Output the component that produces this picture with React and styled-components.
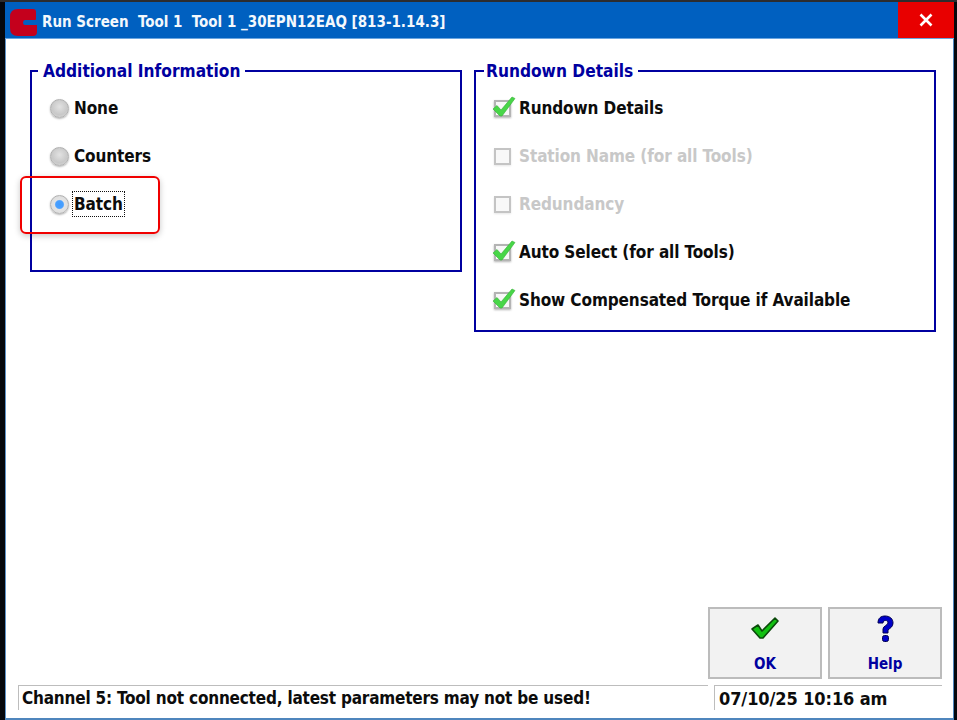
import React from 'react';
import styled, { createGlobalStyle } from 'styled-components';

const Global = createGlobalStyle`
   html, body { margin: 0; padding: 0; background: #05070c; }
   body { font-family: "DejaVu Sans Condensed", "DejaVu Sans", sans-serif; font-stretch: condensed; }
`;

const Screen = styled.div`
   width: 957px;
   height: 720px;
   box-sizing: border-box;
   padding: 0 3px 0 5px;
   border-top: 2px solid #2c2c2e;
   background: #05070c;
   display: flex;
   overflow: hidden;
`;

const Window = styled.div`
   position: relative;
   flex: 1;
   display: flex;
   flex-direction: column;
   background: #fff;
   border-left: 1px solid #5f93c8;
   border-right: 1px solid #4f86bd;
   border-bottom: 2px solid #4f86bd;
`;

const TitleBar = styled.header`
   height: 36px;
   margin: 0 -1px 0 -1px;
   background: #0060c0;
   border-bottom: 1px solid #6aa5e0;
   display: flex;
   align-items: center;
   flex-shrink: 0;
`;

const Logo = styled.svg`
   width: 28px;
   height: 27px;
   margin: 5px 0 0 5px;
   flex-shrink: 0;
`;

const Title = styled.div`
   flex: 1;
   margin: 3px 0 0 4px;
   color: #f4f8fc;
   font-size: 15px;
   font-weight: 700;
   white-space: pre;
`;

const CloseButton = styled.button`
   width: 56px;
   height: 36px;
   padding: 0;
   border: 0;
   background: #e80000;
   display: flex;
   align-items: center;
   justify-content: center;
`;

const Panels = styled.div`
   display: flex;
   align-items: flex-start;
   padding: 22px 0 0 24px;
   flex: 1;
`;

const Group = styled.fieldset`
   box-sizing: border-box;
   width: ${(p) => p.$width}px;
   height: ${(p) => p.$height}px;
   margin: 0 ${(p) => p.$gap || 0}px 0 0;
   padding: 3px 0 0 17px;
   border: 2px solid #0000a0;
   min-inline-size: 0;
`;

const Legend = styled.legend`
   margin-left: ${(p) => p.$offset}px;
   padding: 0 5px 0 ${(p) => p.$padLeft ?? 5}px;
   color: #0000a0;
   font-size: 17.2px;
   font-weight: 700;
   line-height: 20px;
`;

const Row = styled.div`
   height: 48px;
   display: flex;
   align-items: center;
   font-size: 17px;
   letter-spacing: -0.1px;
   font-weight: 700;
   color: ${(p) => (p.$disabled ? '#c8c8c8' : '#0c0c0c')};
`;

const RadioRow = styled(Row)`
   margin-left: 1px;
`;

const Radio = styled.span`
   box-sizing: border-box;
   width: 19px;
   height: 19px;
   margin-right: ${(p) => (p.$on ? 4 : 5)}px;
   border-radius: 50%;
   flex-shrink: 0;
   border: 1px solid #b0b0b0;
   box-shadow: 0 1px 2px rgba(0, 0, 0, 0.3);
   background: ${(p) =>
      p.$on
         ? 'radial-gradient(circle, #3f9bff 0, #4aa0ff 32%, #e4e4e4 42%, #d8d8d8 100%)'
         : 'radial-gradient(circle at 50% 40%, #e2e2e2 0, #c8c8c8 60%, #dedede 100%)'};
`;

const Focus = styled.span`
   padding: 0 1px;
   line-height: 24px;
   outline: 1px dotted #111;
`;

const CheckWrap = styled.span`
   position: relative;
   box-sizing: border-box;
   width: 17px;
   height: 17px;
   margin: 0 8px 0 1px;
   flex-shrink: 0;
   background: #f8f8f8;
   border: 2px solid ${(p) => (p.$disabled ? '#c4c4c4' : '#b4b4b4')};
   box-shadow: 0 1px 2px rgba(0, 0, 0, ${(p) => (p.$disabled ? 0.1 : 0.3)});
`;

const Tick = styled.svg`
   position: absolute;
   left: -4px;
   top: -6px;
   width: 24px;
   height: 22px;
`;

const Marker = styled.div`
   position: absolute;
   left: 14px;
   top: 174px;
   box-sizing: border-box;
   width: 140px;
   height: 58px;
   border: 2px solid #f00000;
   border-radius: 6px;
   box-shadow: 0 2px 6px rgba(0, 0, 0, 0.22);
`;

const Actions = styled.div`
   display: flex;
   justify-content: flex-end;
   gap: 6px;
   padding-right: 11px;
   flex-shrink: 0;
`;

const ActionButton = styled.button`
   box-sizing: border-box;
   width: 114px;
   height: 72px;
   padding: 6px 0 4px;
   background: #f2f2f2;
   border: 2px solid #bcbcbc;
   color: #0000a0;
   font-family: inherit;
   font-stretch: condensed;
   font-size: 15px;
   font-weight: 700;
   display: flex;
   flex-direction: column;
   align-items: center;
   justify-content: space-between;
`;

const StatusBar = styled.footer`
   display: flex;
   gap: 6px;
   height: 25px;
   margin: 6px 11px 8px 12px;
   flex-shrink: 0;
`;

const StatusCell = styled.div`
   box-sizing: border-box;
   flex: 1;
   padding: 0 0 0 3px;
   border-top: 1px solid #bdbdbd;
   border-left: 1px solid #bdbdbd;
   color: #0c0c0c;
   font-size: 17px;
   letter-spacing: -0.2px;
   font-weight: 700;
   line-height: 25px;
   white-space: nowrap;
`;

const ClockCell = styled(StatusCell)`
   flex: 0 0 228px;
   padding-left: 4px;
   font-size: 18px;
   letter-spacing: -0.1px;
`;

const GreenTick = () => (
   <Tick viewBox="0 0 24 22">
      <path
         d="M1 13 L5 9.5 L9 14 L20 1 L23 2.5 L10 20 L8 20 Z"
         fill="#48d648"
         stroke="#35b035"
         strokeWidth="0.6"
      />
   </Tick>
);

const CheckRow = ({ label, checked, disabled }) => (
   <Row $disabled={disabled}>
      <CheckWrap $disabled={disabled}>{checked && <GreenTick />}</CheckWrap>
      {label}
   </Row>
);

const App = () => {
   return (
      <Screen>
         <Global />
         <Window>
            <TitleBar>
               <Logo viewBox="0 0 28 27">
                  <path
                     d="M8 0 H23 Q26 0 26 3 V10 Q26 11 25 11 H15 Q13 11 13 13.5 Q13 16 15 16 H27 V23 Q27 27 23 27 H8 Q0 27 0 19 V8 Q0 0 8 0 Z"
                     fill="#c4001c"
                  />
               </Logo>
               <Title>Run Screen  Tool 1  Tool 1 _30EPN12EAQ [813-1.14.3]</Title>
               <CloseButton aria-label="close">
                  <svg width="14" height="14" viewBox="0 0 14 14">
                     <path d="M1.5 1.5 L12.5 12.5 M12.5 1.5 L1.5 12.5" stroke="#fff" strokeWidth="2.6" />
                  </svg>
               </CloseButton>
            </TitleBar>

            <Panels>
               <Group $width={432} $height={211} $gap={12}>
                  <Legend $offset={-11}>Additional Information</Legend>
                  <RadioRow>
                     <Radio />
                     None
                  </RadioRow>
                  <RadioRow>
                     <Radio />
                     Counters
                  </RadioRow>
                  <RadioRow>
                     <Radio $on />
                     <Focus>Batch</Focus>
                  </RadioRow>
               </Group>

               <Group $width={462} $height={271}>
                  <Legend $offset={-9} $padLeft={2}>
                     Rundown Details
                  </Legend>
                  <CheckRow label="Rundown Details" checked />
                  <CheckRow label="Station Name (for all Tools)" disabled />
                  <CheckRow label="Redundancy" disabled />
                  <CheckRow label="Auto Select (for all Tools)" checked />
                  <CheckRow label="Show Compensated Torque if Available" checked />
               </Group>
            </Panels>

            <Actions>
               <ActionButton>
                  <svg width="30" height="26" viewBox="0 0 30 26">
                     <path
                        d="M2 14 L8 10 L12 16 L25 3 L28 6 L13 23 L10 23 Z"
                        fill="#12c012"
                        stroke="#0a4a0a"
                        strokeWidth="1.6"
                        strokeLinejoin="round"
                     />
                  </svg>
                  OK
               </ActionButton>
               <ActionButton>
                  <svg width="20" height="28" viewBox="0 0 20 28">
                     <path
                        d="M3 8 C3 3 6 1 10 1 C15 1 18 4 18 8 C18 12 15 13 13 15 V18 H8 V14 C8 11 13 10 13 8 C13 6 12 5.5 10.5 5.5 C9 5.5 8 6.5 8 8 Z"
                        fill="#0000c8"
                        stroke="#000050"
                     />
                     <rect x="7.5" y="20.5" width="6" height="6" rx="2" fill="#0000c8" stroke="#000050" />
                  </svg>
                  Help
               </ActionButton>
            </Actions>

            <StatusBar>
               <StatusCell>Channel 5: Tool not connected, latest parameters may not be used!</StatusCell>
               <ClockCell>07/10/25 10:16 am</ClockCell>
            </StatusBar>

            <Marker />
         </Window>
      </Screen>
   );
};

export default App;
